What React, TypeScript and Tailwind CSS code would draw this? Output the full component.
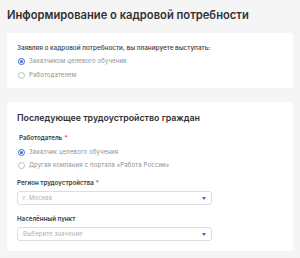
import React from "react";

// Radio dot used in both cards
function Radio({ checked, label }: { checked?: boolean; label: string }) {
  return (
    <div className="flex h-[8px] items-center">
      <span
        className={
          checked
            ? "ml-[1px] flex h-[7px] w-[7px] items-center justify-center rounded-full border border-[#2f6fd6]"
            : "ml-[1px] flex h-[7px] w-[7px] items-center justify-center rounded-full border border-[#b9bcc2]"
        }
      >
        {checked && <span className="h-[3px] w-[3px] rounded-full bg-[#2f6fd6]" />}
      </span>
      <span className="ml-[4px] text-[6px] leading-[8px] tracking-[0.15px] text-[#8c8f94]">{label}</span>
    </div>
  );
}

// Select field with the little blue caret
function SelectField({ placeholder }: { placeholder: string }) {
  return (
    <div className="mt-[4px] flex h-[14px] w-[195px] items-center justify-between rounded-[3px] border border-[#dcdde0] bg-white pl-[5px] pr-[5px]">
      <span className="text-[6px] leading-[8px] tracking-[0.1px] text-[#aeb1b6]">{placeholder}</span>
      <svg width="4" height="3" viewBox="0 0 4 3" className="mt-[1px]">
        <path d="M0 0 L4 0 L2 3 Z" fill="#2f6fd6" />
      </svg>
    </div>
  );
}

function Label({ text, required }: { text: string; required?: boolean }) {
  return (
    <div className="h-[8px] text-[6.2px] font-semibold leading-[8px] text-[#3a3c40]">
      {text}
      {required && <span className="ml-[2px] text-[#e5484d]">*</span>}
    </div>
  );
}

export default function App() {
  return (
    <div
      className="h-[258px] w-[300px] overflow-hidden bg-[#f5f5f6] px-[7px]"
      style={{ fontFamily: "Inter, 'Noto Sans', sans-serif" }}
    >
      <h1 className="pt-[9px] text-[11.2px] font-semibold leading-[13px] text-[#2f3135]">
        Информирование о кадровой потребности
      </h1>

      <section className="mt-[11px] rounded-[3px] bg-white pb-[9px] pl-[10px] pt-[11px]">
        <div className="text-[6.4px] font-medium leading-[8px] text-[#3a3c40]">
          Заявляя о кадровой потребности, вы планируете выступать:
        </div>
        <div className="mt-[5px]">
          <Radio checked label="Заказчиком целевого обучения" />
        </div>
        <div className="mt-[6px]">
          <Radio label="Работодателем" />
        </div>
      </section>

      <section className="mt-[14px] rounded-[3px] bg-white pb-[10px] pl-[10px] pt-[11px]">
        <h2 className="text-[8.8px] font-semibold leading-[10px] text-[#2f3135]">
          Последующее трудоустройство граждан
        </h2>
        <div className="mt-[11px] pl-[2px]">
          <Label text="Работодатель" required />
        </div>
        <div className="mt-[6px]">
          <Radio checked label="Заказчик целевого обучения" />
        </div>
        <div className="mt-[5px]">
          <Radio label="Другая компания с портала «Работа России»" />
        </div>
        <div className="mt-[10px]">
          <Label text="Регион трудоустройства" required />
        </div>
        <SelectField placeholder="г. Москва" />
        <div className="mt-[10px]">
          <Label text="Населённый пункт" />
        </div>
        <SelectField placeholder="Выберите значение" />
      </section>
    </div>
  );
}
